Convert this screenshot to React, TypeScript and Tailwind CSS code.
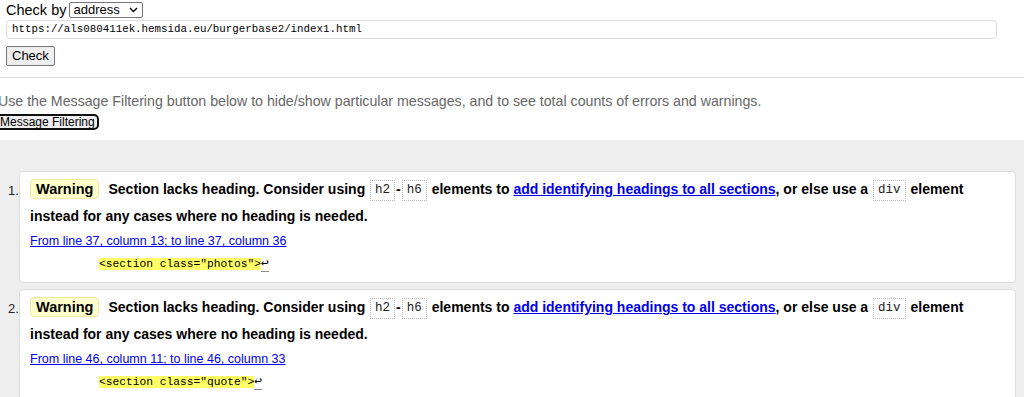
import React from "react";

const sans = { fontFamily: '"Liberation Sans", Arial, sans-serif' };

function Code({ children }: { children: React.ReactNode }) {
  return (
    <code className="mx-[1px] inline-block border border-dotted border-[#bbbbbb] px-[4px] py-[1px] align-middle font-['Liberation_Mono',monospace] text-[12.5px] font-normal leading-[17px] text-[#222]">
      {children}
    </code>
  );
}

function Message({ n, from, code }: { n: number; from: string; code: string }) {
  return (
    <li className="relative mb-[6px] rounded-[4px] border border-[#dddddd] bg-white pb-[10px] pl-[10px] pr-[10px] pt-[4px]">
      <span className="absolute left-[-12px] top-[11px] text-[13px] leading-[16px] text-[#222]">{n}.</span>
      <p className="text-[14px] font-bold leading-[27px] text-black">
        <span className="mr-[9px] inline-block rounded-[4px] border border-[#eee8a8] bg-[#ffffcc] px-[5px] text-[14.5px] leading-[18px]">
          Warning
        </span>
        Section lacks heading. Consider using <Code>h2</Code>-<Code>h6</Code> elements to{" "}
        <a href="#" className="text-[#0000ee] underline">
          add identifying headings to all sections
        </a>
        , or else use a <Code>div</Code> element instead for any cases where no heading is needed.
      </p>
      <p className="mt-[3px] text-[12.5px] leading-[16px]">
        <a href="#" className="text-[#0000ee] underline">
          {from}
        </a>
      </p>
      <p className="mt-[7px] pl-[69px] font-['Liberation_Mono',monospace] text-[11.25px] leading-[16px] text-black">
        <span className="bg-[#ffff66]">{code}</span>
        <span className="border-b border-[#888] text-[13px]">↩</span>
      </p>
    </li>
  );
}

export default function App() {
  return (
    <div className="h-[397px] w-[1024px] overflow-hidden bg-white" style={sans}>
      <div className="px-[6px] pt-[1px]">
        <div className="flex items-center gap-[3px] text-[14.5px] leading-[18px] text-black">
          <span>Check by</span>
          <div className="flex h-[16px] w-[74px] items-center justify-between rounded-[2px] border border-[#767676] bg-white pl-[3px] pr-[4px] text-[13px]">
            <span>address</span>
            <svg width="9" height="6" viewBox="0 0 9 6">
              <path d="M1 1l3.5 3.5L8 1" fill="none" stroke="#000" strokeWidth="1.4" />
            </svg>
          </div>
        </div>
        <div className="mt-[1px] flex h-[19px] w-[991px] items-center rounded-[4px] border border-[#dddddd] pl-[5px] font-['Liberation_Mono',monospace] text-[10.8px] text-black">
          https://als080411ek.hemsida.eu/burgerbase2/index1.html
        </div>
        <div className="mt-[7px] inline-flex h-[20px] items-center rounded-[2px] border border-[#767676] bg-[#efefef] px-[5px] text-[13px] text-black">
          Check
        </div>
      </div>
      <div className="mt-[10px] border-t border-[#dddddd]" />
      <p className="ml-[-2px] mt-[15px] whitespace-nowrap text-[14.2px] leading-[16px] text-[#666666]">
        Use the Message Filtering button below to hide/show particular messages, and to see total counts of errors and warnings.
      </p>
      <div className="ml-[-4px] mt-[3px] inline-flex h-[16px] items-center rounded-[5px] border-2 border-[#101010] bg-[#efefef] px-[2px] text-[12px] leading-[14px] text-black">
        Message Filtering
      </div>
      <div className="mt-[7px] h-[400px] bg-[#eeeeee] pt-[31px]">
        <ol className="ml-[19px] mr-[8px]">
          <Message n={1} from="From line 37, column 13; to line 37, column 36" code={'<section class="photos">'} />
          <Message n={2} from="From line 46, column 11; to line 46, column 33" code={'<section class="quote">'} />
        </ol>
      </div>
    </div>
  );
}
